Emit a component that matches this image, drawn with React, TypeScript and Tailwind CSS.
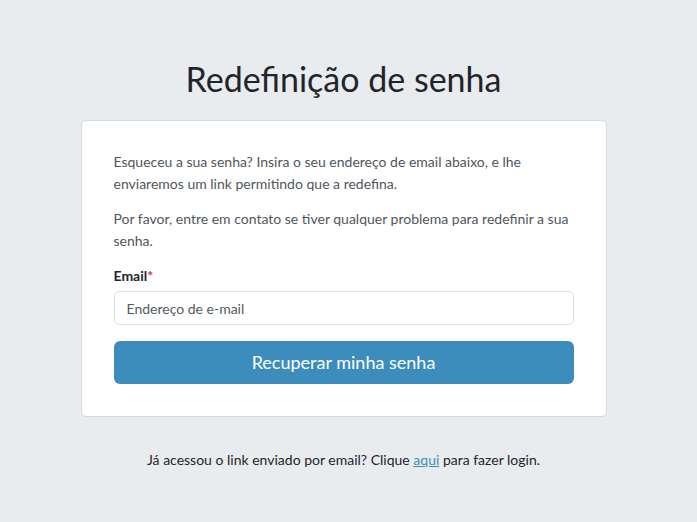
import React from "react";

export default function App() {
  return (
    <div
      className="min-h-[522px] w-full bg-[#e9ecef] pr-[10px] pt-[57px] text-[#4f565c]"
      style={{ fontFamily: "Lato, 'Open Sans', sans-serif" }}
    >
      <div className="mx-auto flex w-[526px] flex-col items-center">
        <h1 className="mb-[19px] text-[34px] leading-[44px] text-[#212529]">Redefinição de senha</h1>

        <div className="w-full rounded-[5px] border border-[#d6dade] bg-white px-[32px] pb-[32px] pt-[30px]">
          <p className="mb-[13px] text-[14px] leading-[22px]">
            Esqueceu a sua senha? Insira o seu endereço de email abaixo, e lhe enviaremos um link permitindo que a redefina.
          </p>
          <p className="mb-[13px] text-[14px] leading-[22px]">
            Por favor, entre em contato se tiver qualquer problema para redefinir a sua senha.
          </p>

          <label className="block text-[14px] font-bold leading-[22px] text-[#212529]">
            Email<span className="text-[#dc3545]">*</span>
          </label>
          <input
            type="email"
            placeholder="Endereço de e-mail"
            className="mt-[4px] block h-[34px] w-full rounded-[5px] border border-[#dcdfe3] px-[12px] text-[14px] text-[#495057] placeholder:text-[#555b61] focus:outline-none"
          />

          <button className="mt-[16px] h-[43px] w-full rounded-[6px] bg-[#3c8dbc] text-[18px] text-white">
            Recuperar minha senha
          </button>
        </div>

        <p className="mt-[32px] text-[14px] leading-[22px] text-[#212529]">
          Já acessou o link enviado por email? Clique{" "}
          <a href="#" className="text-[#3c8dbc] underline">aqui</a> para fazer login.
        </p>
      </div>
    </div>
  );
}
